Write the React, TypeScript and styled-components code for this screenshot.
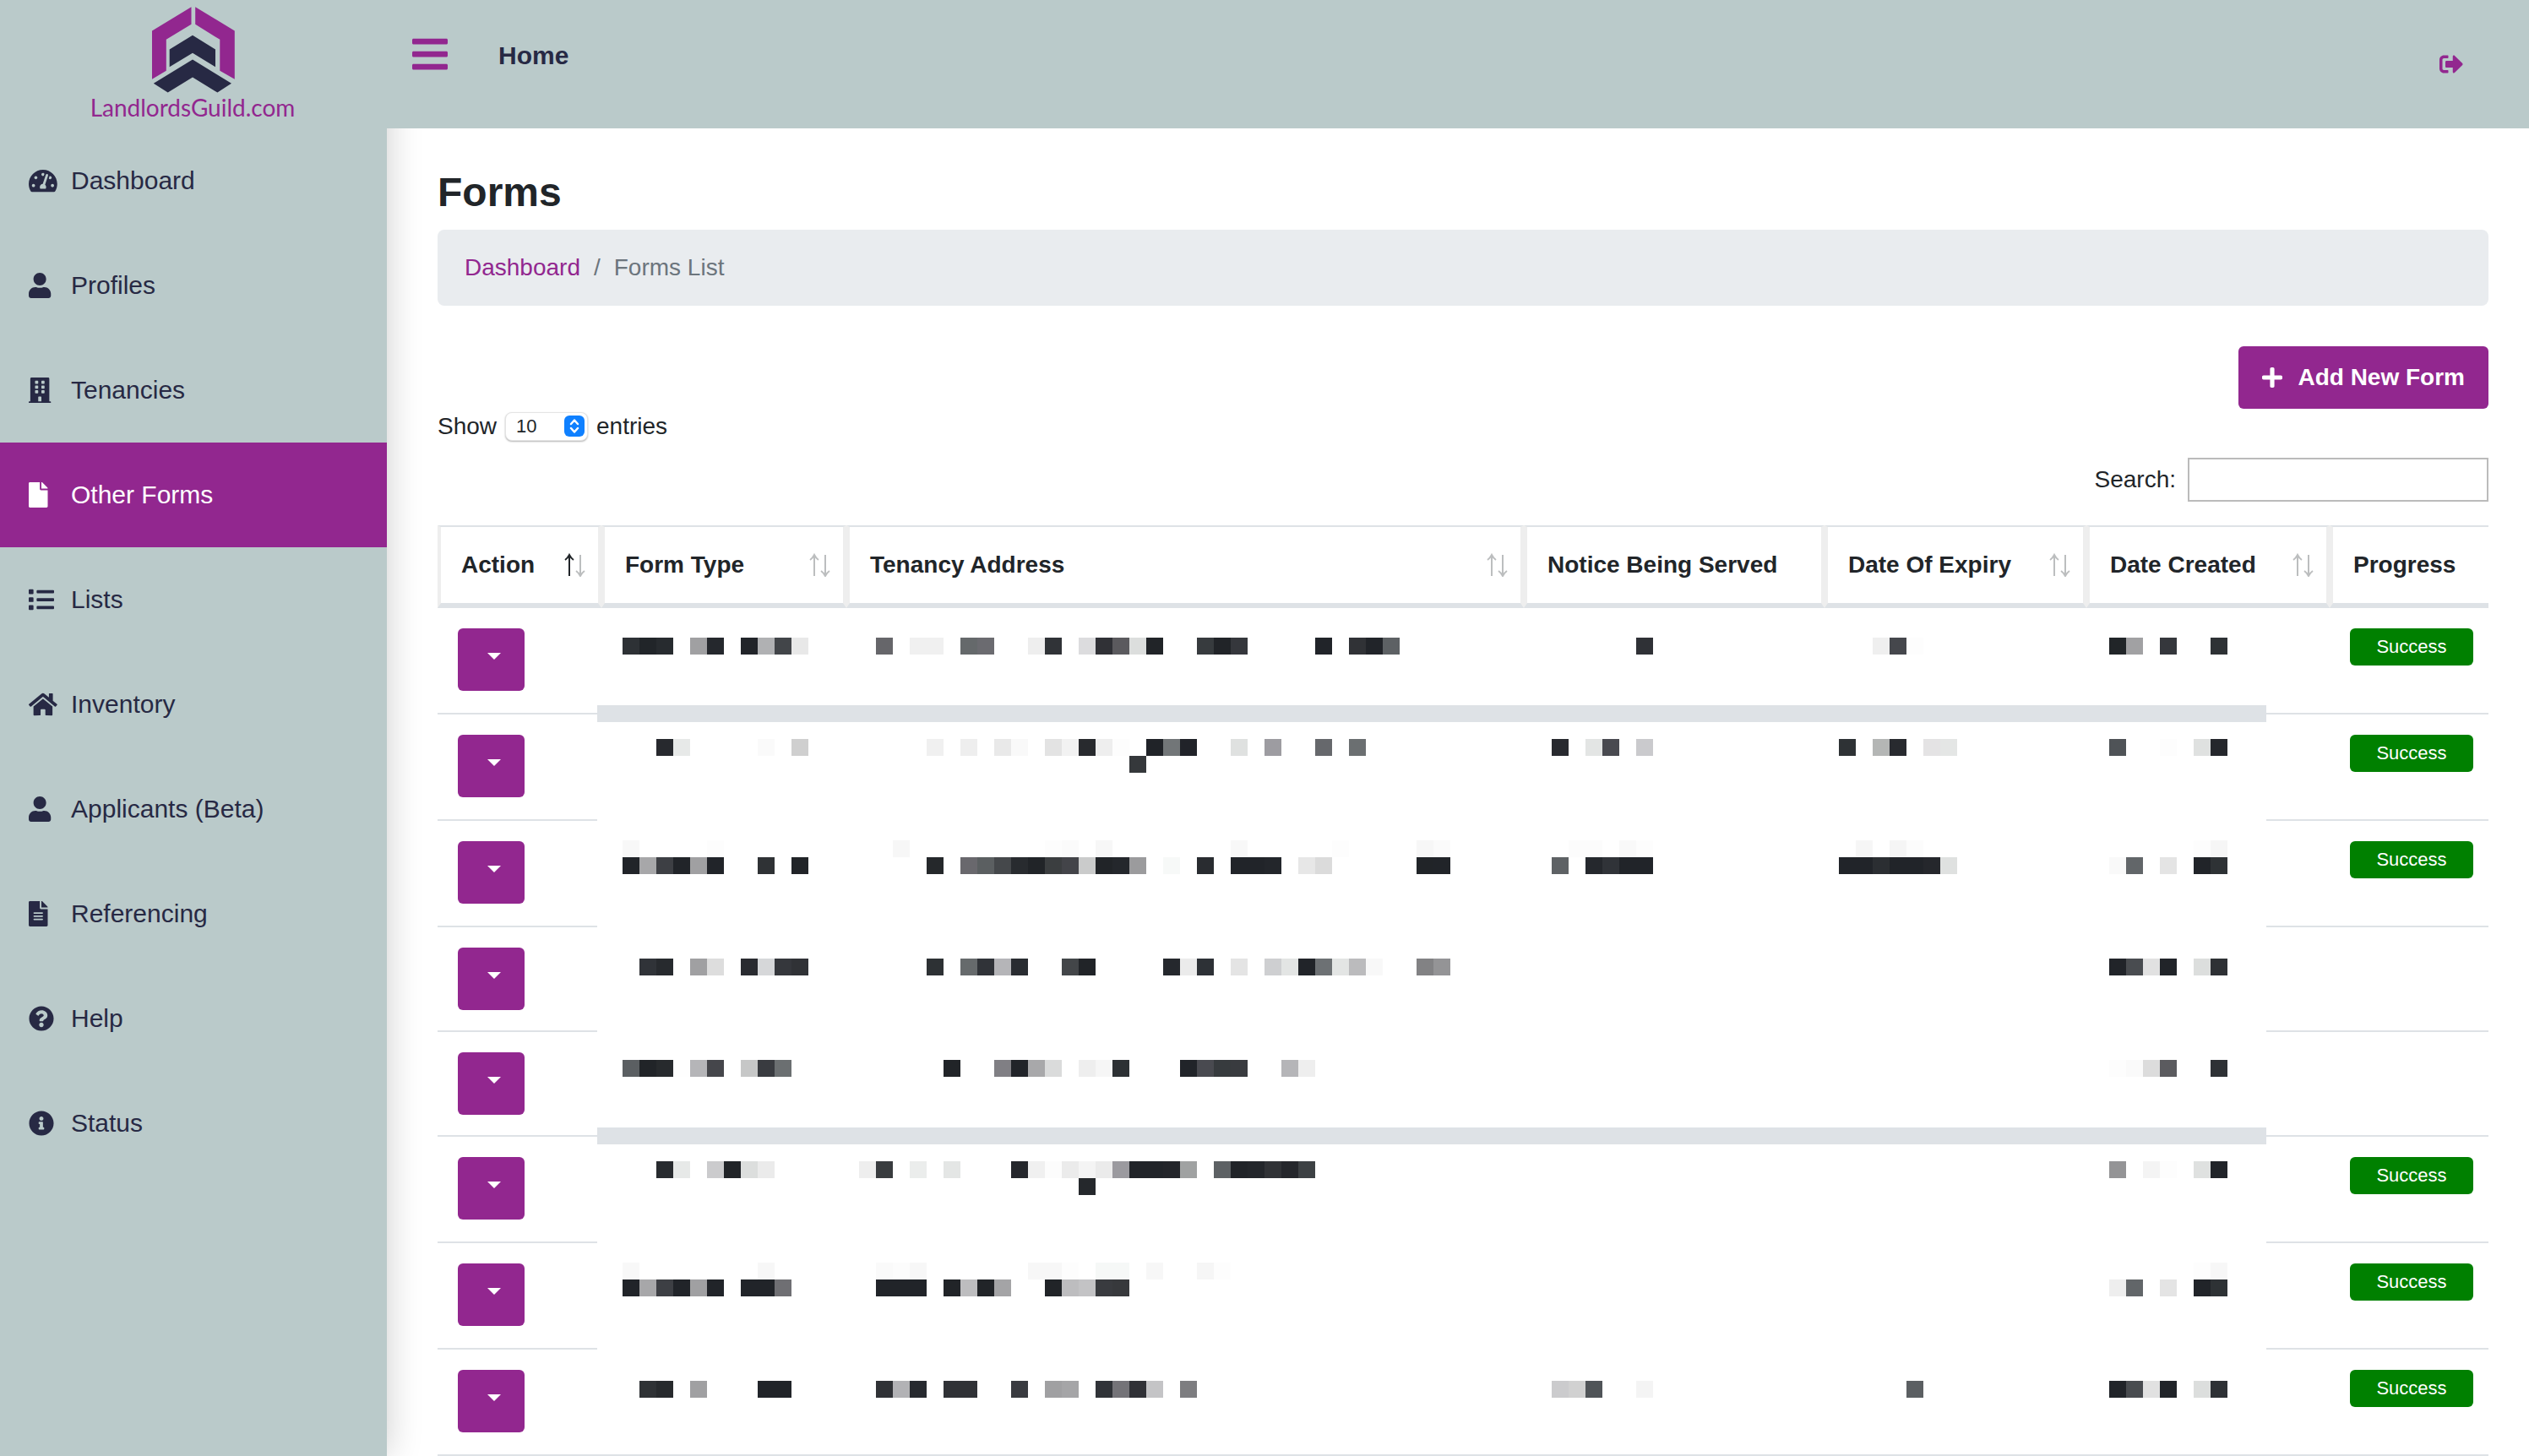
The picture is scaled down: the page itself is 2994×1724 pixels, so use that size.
import React from "react";
import styled, { createGlobalStyle } from "styled-components";
import {
  FaBars,
  FaBuilding,
  FaFile,
  FaFileAlt,
  FaHome,
  FaInfoCircle,
  FaList,
  FaPlus,
  FaQuestionCircle,
  FaSignOutAlt,
  FaTachometerAlt,
  FaUser,
} from "react-icons/fa";
import type { IconType } from "react-icons";

const color = {
  purple: "#92278f",
  navy: "#272944",
  sage: "#bacaca",
  ink: "#212529",
  muted: "#6c757d",
  line: "#dee2e6",
  divider: "#eeeeee",
  success: "#008000",
};

const GlobalStyle = createGlobalStyle`
  *, *::before, *::after { box-sizing: border-box; }
  body {
    margin: 0;
    background: #fff;
    color: ${color.ink};
    font-family: "Liberation Sans", Arial, sans-serif;
    font-size: 28px;
    line-height: 42px;
  }
  button, input, select { font: inherit; }
`;

const Page = styled.div`
  display: grid;
  grid-template-columns: 458px minmax(0, 1fr);
  min-height: 100vh;
`;

const Sidebar = styled.aside`
  position: relative;
  z-index: 1;
  background: ${color.sage};
  box-shadow: 0 0 40px rgba(0, 0, 0, 0.2);
`;

const Brand = styled.a`
  display: flex;
  flex-direction: column;
  align-items: center;
  height: 152px;
  padding: 8px 2px 0 0;
  color: ${color.purple};
  font-family: Lato, "Noto Sans", sans-serif;
  font-size: 28px;
  line-height: 34px;
  text-decoration: none;
`;

const NavLink = styled.a<{ $active?: boolean }>`
  display: flex;
  align-items: center;
  height: 124px;
  padding-left: 34px;
  background: ${(p) => (p.$active ? color.purple : "transparent")};
  color: ${(p) => (p.$active ? "#fff" : color.navy)};
  font-size: 30px;
  text-decoration: none;
`;

const NavIcon = styled.span`
  display: flex;
  width: 50px;

  svg {
    width: 34px;
    height: 30px;
  }
`;

const Main = styled.div`
  display: flex;
  flex-direction: column;
`;

const TopBar = styled.header`
  position: relative;
  z-index: 2;
  display: flex;
  align-items: flex-start;
  height: 152px;
  padding: 40px 78px 0 30px;
  background: ${color.sage};
`;

const IconButton = styled.button<{ $width: number; $height: number }>`
  display: flex;
  padding: 0;
  border: 0;
  background: none;
  color: ${color.purple};

  svg {
    width: ${(p) => p.$width}px;
    height: ${(p) => p.$height}px;
  }
`;

const HomeLink = styled.a`
  flex: 1;
  margin-left: 60px;
  padding-top: 5px;
  color: ${color.navy};
  font-size: 30px;
  font-weight: 700;
  text-decoration: none;
`;

const SignOut = styled.div`
  padding-top: 22px;
`;

const Content = styled.main`
  padding: 46px 48px 0 60px;
`;

const Title = styled.h1`
  margin: 0 0 14px;
  font-size: 48px;
  line-height: 60px;
`;

const Breadcrumb = styled.nav`
  display: flex;
  gap: 16px;
  padding: 24px 32px;
  border-radius: 8px;
  background: #e9ecef;
  color: ${color.muted};

  a {
    color: ${color.purple};
    text-decoration: none;
  }
`;

const Actions = styled.div`
  display: flex;
  justify-content: flex-end;
  margin-top: 48px;
`;

const AddButton = styled.button`
  display: flex;
  align-items: center;
  gap: 18px;
  height: 74px;
  padding: 0 28px;
  border: 0;
  border-radius: 6px;
  background: ${color.purple};
  color: #fff;
  font-weight: 700;

  svg {
    width: 24px;
    height: 28px;
  }
`;

const LengthRow = styled.div`
  display: flex;
  align-items: center;
  gap: 10px;
  height: 42px;
`;

const SelectBox = styled.span`
  position: relative;
  display: flex;

  svg {
    position: absolute;
    top: 4px;
    right: 4px;
    pointer-events: none;
  }
`;

const LengthSelect = styled.select`
  width: 98px;
  height: 34px;
  padding: 0 36px 0 12px;
  border: 1px solid #e4e4e4;
  border-radius: 8px;
  appearance: none;
  background: #fff;
  box-shadow: 0 1px 2px rgba(0, 0, 0, 0.3);
  color: ${color.ink};
  font-size: 22px;
  line-height: 32px;
`;

const SearchRow = styled.div`
  display: flex;
  align-items: center;
  justify-content: flex-end;
  gap: 14px;
  margin: 16px 0 28px;
`;

const SearchInput = styled.input`
  width: 356px;
  height: 52px;
  padding: 0 8px;
  border: 2px solid #bbbbbb;
  background: #fff;
`;

const TableArea = styled.div`
  position: relative;
  overflow: hidden;
`;

const Table = styled.table`
  width: 2460px;
  border-spacing: 0;
  table-layout: fixed;
`;

const HeadCell = styled.th<{ $width: number }>`
  width: ${(p) => p.$width}px;
  height: 98px;
  padding: 0 15px 0 24px;
  border: 4px solid ${color.divider};
  border-top: 2px solid ${color.line};
  border-bottom: 6px solid ${color.line};
  text-align: left;
  white-space: nowrap;
`;

const HeadContent = styled.div`
  display: flex;
  align-items: center;
  justify-content: space-between;
`;

const Row = styled.tr<{ $tall: boolean }>`
  height: ${(p) => (p.$tall ? 126 : 124)}px;
`;

const Cell = styled.td`
  padding: 24px 24px 0;
  border-bottom: 2px solid ${color.line};
  vertical-align: top;
`;

const ActionButton = styled.button`
  display: block;
  width: 79px;
  height: 74px;
  padding: 0 0 8px 6px;
  border: 0;
  border-radius: 6px;
  background: ${color.purple};
`;

const Caret = styled.span`
  display: block;
  width: 0;
  margin: 0 auto;
  border: 8px solid transparent;
  border-top-color: #fff;
  border-bottom: 0;
`;

const Badge = styled.span`
  display: block;
  width: 146px;
  border-radius: 6px;
  background: ${color.success};
  color: #fff;
  font-size: 22px;
  line-height: 44px;
  text-align: center;
`;

const Mosaic = styled.svg`
  position: absolute;
  top: 113px;
  left: 189px;
`;

const navItems: { label: string; icon: IconType; active?: boolean }[] = [
  { label: "Dashboard", icon: FaTachometerAlt },
  { label: "Profiles", icon: FaUser },
  { label: "Tenancies", icon: FaBuilding },
  { label: "Other Forms", icon: FaFile, active: true },
  { label: "Lists", icon: FaList },
  { label: "Inventory", icon: FaHome },
  { label: "Applicants (Beta)", icon: FaUser },
  { label: "Referencing", icon: FaFileAlt },
  { label: "Help", icon: FaQuestionCircle },
  { label: "Status", icon: FaInfoCircle },
];

const columns: { label: string; width: number; sort?: "none" | "asc" }[] = [
  { label: "Action", width: 194, sort: "asc" },
  { label: "Form Type", width: 290, sort: "none" },
  { label: "Tenancy Address", width: 802, sort: "none" },
  { label: "Notice Being Served", width: 356 },
  { label: "Date Of Expiry", width: 310, sort: "none" },
  { label: "Date Created", width: 288, sort: "none" },
  { label: "Progress", width: 220 },
];

const statuses = ["Success", "Success", "Success", "", "", "Success", "Success", "Success"];

/* Redacted values: each line is a row of 20px blocks, written as
   "first column: shade, shade, ..." with consecutive blocks in one run. */
const mosaicRows: { y: number; runs: string }[] = [
  { y: 20, runs: "0:2d3135,212529,272b2f 4:a0a0a2,25282d 7:212429,b0b1b3,424549,e8e8e8 15:66666a 17:f0f0f0,f0f0f0 20:65696b,6b6b70 24:eeeeee,303337 27:dcdcde,303136,5b5a5e,dcdedd,212428 34:373b3e,212428,35373c 41:212429 43:303236,212429,5d6164 60:2f3136 74:efefef,45474c,fdfdfd 88:212528,a1a1a3 91:35373c 94:2e3235" },
  { y: 140, runs: "2:27292e,e7e9e8 8:fafafa 10:cfcfcf 18:f0f0f0 20:eeeeee 22:e9e9e9,f9f9f9 25:e3e3e3,f2f2f2,282a2e,eeeeee,fdfdfd 31:202328,727678,212329 36:dfe1e0 38:9d9ca1 41:66686c 43:6b6f71 55:282a2f 57:e3e5e4,494a50 60:cacacd 72:2e3235 74:b4b6b5,282a2f 77:e4e3e4,e4e6e5 88:4f5357 91:fdfdfd 93:dfe1e0,25272c" },
  { y: 160, runs: "30:35383b" },
  { y: 260, runs: "0:f8f8f8 5:fdfdfd 16:f7f7f7 25:fdfdfd,fbfbfb 28:f7f7f7 36:f8f8f8 42:fdfdfd 47:f7f7f7,fbfbfb 56:fcfcfc,fcfcfc 59:f9f9f9,fdfdfd 73:f6f6f6 75:f5f5f5,fcfcfc 93:fdfdfd,f6f6f6" },
  { y: 280, runs: "0:212429,a7a7a9,3d3f44,212429,a0a0a2,212429 8:2f3235 10:212428 18:25282b 20:69686d,5b5f61,45484b,282b2f,212428,3b3e40,434449,cacbcb,212428,24272c,9b9b9d 32:f7f9f8 34:292c30 36:212429,212429,23262b 40:e7e7e7,dbdbdb 47:212428,212429 55:5e6265 57:25282d,303338,212429,212429 72:212429,212429,2b2e32,212429,212429,25272c,dfe1e0 88:f9f9f9,626669 91:e4e4e4 93:212429,2e3235" },
  { y: 400, runs: "1:303338,272a2e 4:a0a0a2,dddddd 7:292b30,d6d7d9,35373c,303236 18:2d3134 20:666a6c,303338,b5b5b8,292c31 26:434649,212428 32:25282d,ebebeb,2d3136 36:e4e4e4 38:cecfd1,e3e5e4,212429,6d7174,e3e5e4,bbbbbd,f8f8f8 47:828284,949496 88:212429,494c50,e1e1e1,212429 93:dcdedd,2e3135" },
  { y: 520, runs: "0:5b5f62,212428,272a2d,fefefe,b5b5b8,45464b 7:c6c7c7,393b40,6b6f71 19:212428 22:807f84,212429,a8a8aa,dadbdb 27:eeeeee,f6f6f6,2d3134 33:212429,494a50,373b3e,393b3f 39:b5b5b8,eeeeee 88:fdfdfd,fafafa,dcdcdc,5b5b5f 94:2e3135" },
  { y: 640, runs: "2:282b2f,e7e9e8 5:cbcbcd,212428,dcdedd,ebebeb 14:eeeeee,393c3f 17:ebedec 19:e4e6e5 23:25272c,f0f0f0,fcfcfc,ebebeb,f4f4f4,ebebeb,9b9a9f,212429,212429,23252a,a0a2a2 35:5d6164,212429,23262b,303236,25272c,3d4144 88:949496 90:f4f4f4,fdfdfd 93:dfe1e0,212429" },
  { y: 660, runs: "27:25282c" },
  { y: 760, runs: "0:f8f8f8 8:f7f7f7 15:fafafa,fcfcfc,f7f7f7 24:f7f7f7,f7f7f7,fdfdfd 28:f6f8f7,f6f8f7 31:f7f7f7 34:f6f6f6,fdfdfd 93:fdfdfd,f7f7f7" },
  { y: 780, runs: "0:212429,a7a7a9,3d3f44,212429,a0a0a2,212429 7:212429,212429,6f6f73 15:212429,212429,212429 19:212428,bdbdbf,212428,a4a4a6 25:212428,bdbdbf,c3c3c5,393b3f,37393c 88:eeeeee,626669 91:e4e4e4 93:212429,2e3235" },
  { y: 900, runs: "1:2f3235,272a2d 4:a0a0a2 8:212429,212429 15:303236,b2b2b5,272a2f 19:303236,303236 23:393b40 25:a0a0a2,a5a5a7 28:303338,747378,303136,c4c4c6 33:7d7d80 55:cbcbcd,d1d1d1,505458 60:f4f4f4 76:5b5f62 88:212429,494c50,e1e1e1,212429 93:dcdedd,2e3135" },
];

function RedactedValues() {
  return (
    <Mosaic width="1976" height="980" viewBox="0 0 1976 980" shapeRendering="crispEdges" aria-hidden="true">
      <rect width="1976" height="980" fill="#fff" />
      <rect y="100" width="1976" height="20" fill={color.line} />
      <rect y="600" width="1976" height="20" fill={color.line} />
      {mosaicRows.map(({ y, runs }) =>
        runs.split(" ").flatMap((run) => {
          const [start, shades] = run.split(":");
          return shades.split(",").map((shade, i) => {
            const column = Number(start) + i;
            return (
              <rect key={`${y}-${column}`} x={30 + column * 20} y={y} width="20" height="20" fill={`#${shade}`} />
            );
          });
        })
      )}
    </Mosaic>
  );
}

function Logo() {
  return (
    <svg width="98" height="102" viewBox="179 8.5 98 102" overflow="visible" aria-hidden="true">
      <g fill={color.purple}>
        <path d="M226.5 8.7V29.3L196.8 47.3V84.3L180 94.3V37Z" />
        <path d="M231.2 8.7V29.3L260.3 47.3V84.3L277.8 94.3V37Z" />
      </g>
      <g fill={color.navy}>
        <path d="M228 42.3L255 59V79.7L228 63.3L200.7 79.7V59Z" />
        <path d="M228 71L274 99.3L257.4 110L228 92L198.7 110L181.8 99.3Z" />
      </g>
    </svg>
  );
}

function SortArrows({ ascending }: { ascending: boolean }) {
  return (
    <svg width="26" height="28" viewBox="-1 -2 26 28" fill="none" strokeWidth="2" aria-hidden="true">
      <path d="M6 25V1M1 6Q4 4 6 0Q8 4 11 6" stroke={ascending ? color.ink : "#bcbebf"} />
      <path d="M19 0V24M14 19Q17 21 19 25Q21 21 24 19" stroke="#bcbebf" />
    </svg>
  );
}

function StepperIcon() {
  return (
    <svg width="24" height="25" viewBox="0 0 24 25" fill="none" aria-hidden="true">
      <rect width="24" height="25" rx="6" fill="#0f80ff" />
      <path d="M8 10L12 5.5L16 10M8 15L12 19.5L16 15" stroke="#fff" strokeWidth="2.4" strokeLinecap="round" strokeLinejoin="round" />
    </svg>
  );
}

export default function App() {
  return (
    <>
      <GlobalStyle />
      <Page>
        <Sidebar>
          <Brand href="#">
            <Logo />
            LandlordsGuild.com
          </Brand>
          <nav aria-label="Main">
            {navItems.map(({ label, icon: Icon, active }) => (
              <NavLink key={label} href="#" $active={active}>
                <NavIcon>
                  <Icon preserveAspectRatio="xMinYMid meet" />
                </NavIcon>
                {label}
              </NavLink>
            ))}
          </nav>
        </Sidebar>
        <Main>
          <TopBar>
            <IconButton type="button" $width={42} $height={48} aria-label="Toggle menu">
              <FaBars />
            </IconButton>
            <HomeLink href="#">Home</HomeLink>
            <SignOut>
              <IconButton type="button" $width={28} $height={28} aria-label="Sign out">
                <FaSignOutAlt />
              </IconButton>
            </SignOut>
          </TopBar>
          <Content>
            <Title>Forms</Title>
            <Breadcrumb aria-label="Breadcrumb">
              <a href="#">Dashboard</a>
              <span>/</span>
              <span>Forms List</span>
            </Breadcrumb>
            <Actions>
              <AddButton type="button">
                <FaPlus />
                Add New Form
              </AddButton>
            </Actions>
            <LengthRow>
              <label htmlFor="length">Show</label>
              <SelectBox>
                <LengthSelect id="length" defaultValue="10">
                  <option>10</option>
                  <option>25</option>
                  <option>50</option>
                  <option>100</option>
                </LengthSelect>
                <StepperIcon />
              </SelectBox>
              <span>entries</span>
            </LengthRow>
            <SearchRow>
              <label htmlFor="search">Search:</label>
              <SearchInput id="search" type="search" />
            </SearchRow>
            <TableArea>
              <Table>
                <thead>
                  <tr>
                    {columns.map(({ label, width, sort }) => (
                      <HeadCell key={label} scope="col" $width={width}>
                        <HeadContent>
                          {label}
                          {sort && <SortArrows ascending={sort === "asc"} />}
                        </HeadContent>
                      </HeadCell>
                    ))}
                  </tr>
                </thead>
                <tbody>
                  {statuses.map((status, index) => (
                    <Row key={index} $tall={status !== ""}>
                      <Cell>
                        <ActionButton type="button" aria-label="Row actions">
                          <Caret />
                        </ActionButton>
                      </Cell>
                      <Cell />
                      <Cell />
                      <Cell />
                      <Cell />
                      <Cell />
                      <Cell>{status && <Badge>{status}</Badge>}</Cell>
                    </Row>
                  ))}
                </tbody>
              </Table>
              <RedactedValues />
            </TableArea>
          </Content>
        </Main>
      </Page>
    </>
  );
}
